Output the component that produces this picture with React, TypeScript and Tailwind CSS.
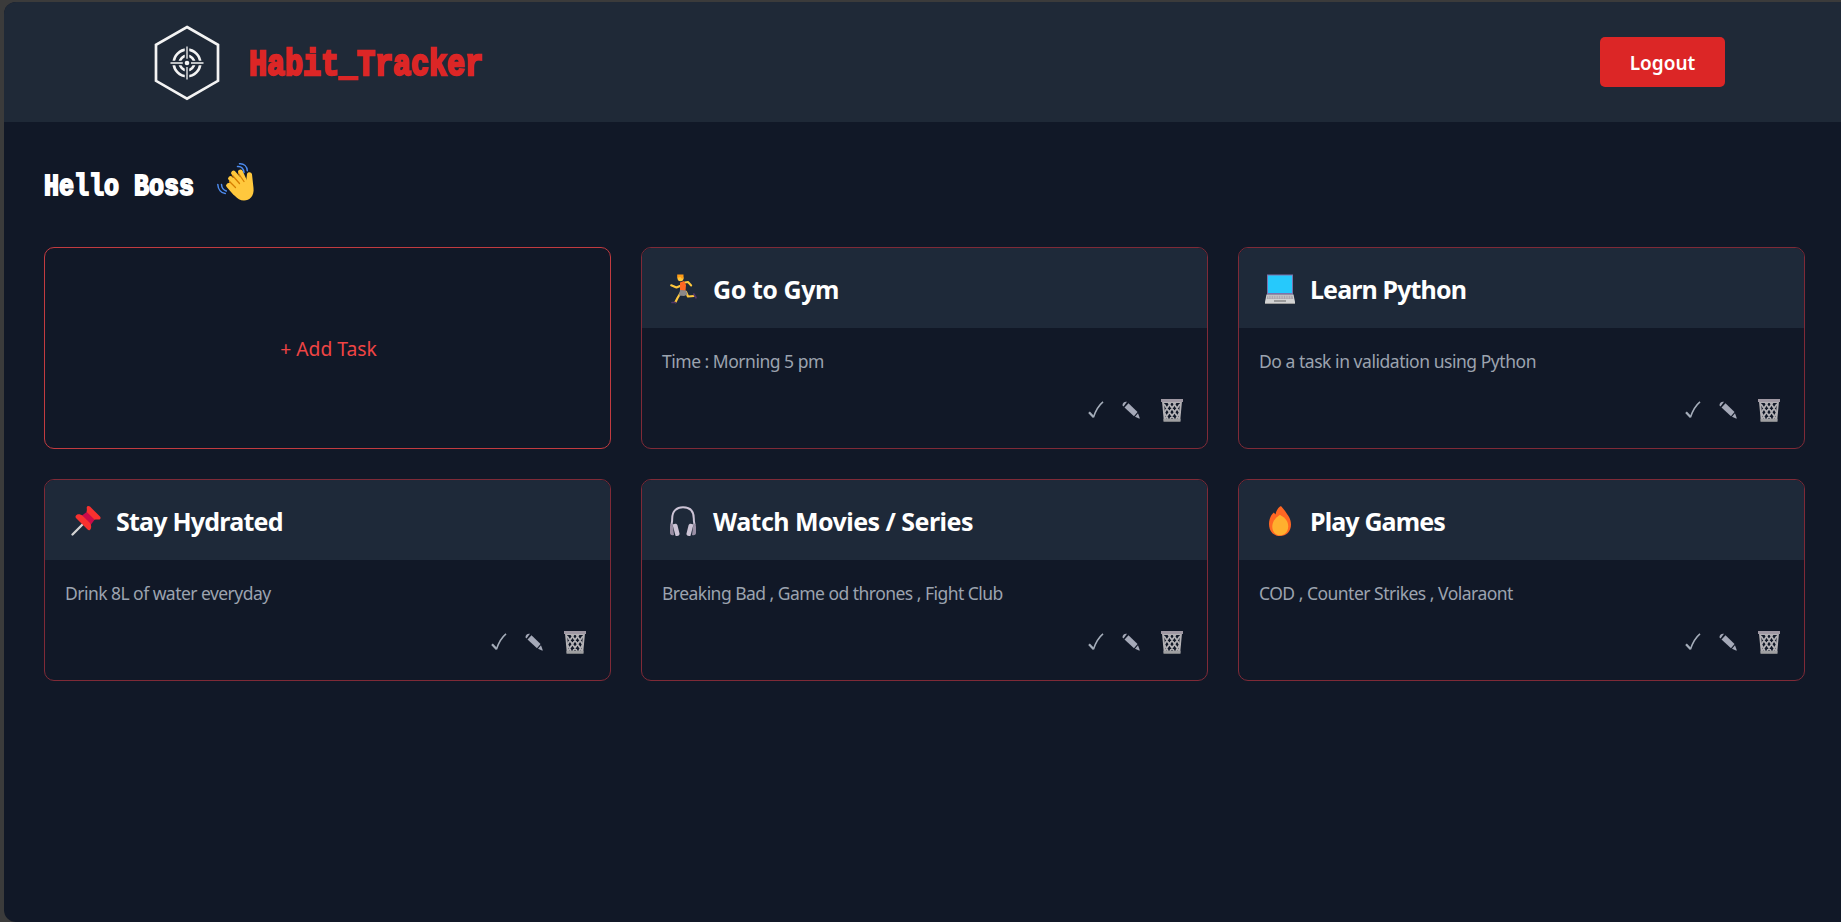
import type { ReactNode } from "react";

function Runner() {
  return (
    <svg viewBox="0 0 32 32" className="h-8 w-8" fill="none" strokeLinecap="round" strokeLinejoin="round">
      <path d="M13 14 9.500 15.500 4.200 13.300" stroke="#ffc83d" strokeWidth="2.200" />
      <path d="M18 10.500 21 10 24.200 13.500" stroke="#ffc83d" strokeWidth="2" />
      <path d="M13.500 21 10.500 26 8.500 30" stroke="#ffc83d" strokeWidth="2.200" />
      <path d="M19 20 21 24.500 27 24" stroke="#ffc83d" strokeWidth="2.200" />
      <path d="M13 10.500 17 9 19 13 18.500 19 13 18.500Z" fill="#ff6723" />
      <path d="m13 18 6 .5 1.500 4-3.500 1.500-5-.5Z" fill="#8b8889" />
      <path d="M26.800 22 29 25.800" stroke="#533566" strokeWidth="1.700" />
      <path d="M5 30.500h3.500" stroke="#533566" strokeWidth="1.700" />
      <circle cx="13.500" cy="6.300" r="3" fill="#ffc83d" />
      <path d="M10.200 6V2.500h6.300v4h-2L13.500 5Z" fill="#ff9b16" />
    </svg>
  );
}

function Laptop() {
  return (
    <svg viewBox="0 0 32 32" className="h-8 w-8">
      <path d="M3 2.500h26v20H3z" fill="#7d72ad" />
      <path d="M4 3.500h24v17.500H4z" fill="#26c9fc" />
      <path d="M2.500 22.500h27L31 30v2H1v-2Z" fill="#d3d3d3" />
      <path d="M3.500 23.500h25l.8 3.500H2.700Z" fill="#aaa5ae" />
      <path d="M4 25h24" stroke="#c9c9c9" strokeWidth="3" strokeDasharray=".7 1" />
      <path d="M10 28h12v2H10z" fill="#9b9b9b" />
      <path d="M1 31h30v1H1z" fill="#9b9b9b" />
    </svg>
  );
}

function Pin() {
  return (
    <svg viewBox="0 0 32 32" className="h-8 w-8">
      <path d="M13 20 2.500 30.500" stroke="#d3d3d3" strokeWidth="2.300" strokeLinecap="round" />
      <path d="m18 7 7.500 7.500-6 8L10 13Z" fill="#ca0b4a" />
      <path d="M16.700 3.800c0-2 2-2.500 3.300-1.200l10 10c1.400 1.500.3 3.200-1.700 2.900-1.500-.2-2.600-.2-3.600.3L16.500 7.800c.5-1.200.4-2.500.2-4Z" fill="#f8312f" />
      <path d="M6 11.500c1.500-1.800 4.500-1.500 6.500.3l7 6.700c2 2.200 2.300 5.500.7 7.200-.8.8-1.800.7-2.600-.1L6.200 14.200c-.8-.8-1-1.800-.2-2.700Z" fill="#f8312f" />
    </svg>
  );
}

function Headphones() {
  return (
    <svg viewBox="0 0 32 32" className="h-8 w-8">
      <path d="M4.500 21c0-2 .7-2.500.7-6.500C5.200 7 9.500 3.300 16 3.300S26.800 7 26.800 14.500c0 4 .7 4.500.7 6.500" fill="none" stroke="#cdc4d6" strokeWidth="2" />
      <path d="M3 23c0-2.500 1-4 2.500-3.500l1.500 11.500c-2.500 1-4.200-.5-4-2.500Z" fill="#998ea4" />
      <path d="M5.500 20.500c3-1.500 4.500-1 5 1l2 8c.5 2-2.500 3-4 2.300Z" fill="#cdc4d6" />
      <path d="M29 23c0-2.500-1-4-2.500-3.500l-1.500 11.500c2.500 1 4.200-.5 4-2.500Z" fill="#998ea4" />
      <path d="M26.500 20.500c-3-1.500-4.500-1-5 1l-2 8c-.5 2 2.500 3 4 2.300Z" fill="#cdc4d6" />
    </svg>
  );
}

function Flame() {
  return (
    <svg viewBox="0 0 32 32" className="h-8 w-8">
      <path d="M16 2.500C13.500 4.500 12 7.500 11.500 10.500L9.800 8.500C6.500 11.500 5 15.500 5 20 5 27.500 9.800 32 16 32s11-4.500 11-11.500c0-5.500-2.600-8.500-4.600-11.500-1.200-2-3.500-4.800-4.800-6.300-.5-.6-1.100-.6-1.600-.2Z" fill="#ff6723" />
      <path d="M15.300 11.200C11 14.200 8.300 17.800 8.300 22.500c0 5.500 3.400 8.800 7.700 8.800s8.200-3.300 8.200-8.800c0-5.500-3.200-8.800-7.600-11.300-.4-.2-.9-.2-1.300 0Z" fill="#ffb02e" />
    </svg>
  );
}

function Wave() {
  return (
    <svg viewBox="0 0 38 38" className="h-[38px] w-[38px]" fill="none" strokeLinecap="round" strokeLinejoin="round">
      <path d="M10.500 22 17 14l7 2 5 3.500 1-8.500c.5-2.500 4.500-2.500 5 .2L36.500 25c1 8-4 12.500-9.500 12.500-4 0-6.500-2-9-4.500Z" fill="#ffc83d" />
      <path d="m18 30-6.500-7.500M22 25 13.500 15.500M26 21 16.500 10M28 19l-4.500-10" stroke="#ffc83d" strokeWidth="4.800" />
      <path d="m12.500 18.500 6 6M15.500 12.500l7 8M21.500 10.500l5.500 8" stroke="#d67d00" strokeWidth="1.300" />
      <path d="M.8 21.500c.3 5 3.500 8.500 7.500 9M4.500 21.500c.2 3 2 5.500 4.800 6.500M20.500 3.500c3.500-.3 6 2 6.500 6M22.500.8c4.500-.3 7.500 2.700 7.800 7" stroke="#4d8bef" strokeWidth="1.500" />
    </svg>
  );
}

function Logo() {
  return (
    <svg viewBox="0 0 66 76" className="mt-px h-[76px] w-[66px]" fill="none" stroke="#f3f3f3">
      <path d="M33 2 64 19.800v36L33 73.700 2 55.800v-36Z" strokeWidth="2.700" />
      <circle cx="33" cy="38" r="13.300" strokeWidth="2.700" />
      <circle cx="33" cy="38" r="7.300" strokeWidth="2.700" />
      <path d="M33 22v12M33 42v12M17 38h12M37 38h12" stroke="#1f2937" strokeWidth="4.500" />
      <path d="M33 21.500v12.300M33 42v12.500M16.500 38h12.300M37 38h12.500" strokeWidth="1.300" />
      <circle cx="33" cy="38" r="2.300" fill="#f3f3f3" stroke="none" />
    </svg>
  );
}

function CheckMark() {
  return (
    <svg viewBox="0 0 16 18" className="h-[18px] w-4" fill="none" stroke="#a5adba">
      <path d="M1 11.300 5.500 16" strokeWidth="2.300" />
      <path d="M5.300 16.500C7.500 10 10.500 4.500 15 .8" strokeWidth="1.600" />
    </svg>
  );
}

function Pencil() {
  return (
    <svg viewBox="0 0 18 18" className="h-[18px] w-[18px]" fill="#a5a9b8">
      <path d="M.5 4.500C.3 2 2.500.3 5 .8L1.500 5.500Z" />
      <path d="M2.500 6.500 6.500 2.300 15.500 11 12 15.200Z" />
      <path d="m13 15.700 3-3.500 1.700 4.800c.1.500-.2.700-.7.600Z" />
    </svg>
  );
}

function Basket() {
  return (
    <svg viewBox="0 0 22 23" className="h-[23px] w-[22px]" fill="none" stroke="#b3b1b5">
      <path d="M2 3h18l-1.700 18H3.700Z" strokeWidth="1.900" />
      <path d="M7 3 18 20M12 3l7 11M3 5l10 15M3 13l4 7M15 3 4 20M10 3 3 14M19 5 9 20M19 13l-4 7" strokeWidth="1.700" />
      <path d="M0 1.500h22" stroke="#9f98a3" strokeWidth="3" />
      <path d="M2.500 21.300h17" stroke="#9f9fa1" strokeWidth="3" />
    </svg>
  );
}

type Task = { icon: ReactNode; title: string; titleClass: string; text: string; textClass: string };

const tasks: Task[] = [
  { icon: <Runner />, title: "Go to Gym", titleClass: "tracking-[-0.45px]", text: "Time : Morning 5 pm", textClass: "tracking-[-0.49px]" },
  { icon: <Laptop />, title: "Learn Python", titleClass: "tracking-[-0.88px]", text: "Do a task in validation using Python", textClass: "tracking-[-0.46px]" },
  { icon: <Pin />, title: "Stay Hydrated", titleClass: "tracking-[-0.78px]", text: "Drink 8L of water everyday", textClass: "tracking-[-0.54px]" },
  { icon: <Headphones />, title: "Watch Movies / Series", titleClass: "tracking-[-0.54px]", text: "Breaking Bad , Game od thrones , Fight Club", textClass: "tracking-[-0.53px]" },
  { icon: <Flame />, title: "Play Games", titleClass: "tracking-[-0.87px]", text: "COD , Counter Strikes , Volaraont", textClass: "tracking-[-0.51px]" },
];

function TaskCard({ icon, title, titleClass, text, textClass }: Task) {
  return (
    <article className="flex h-[202px] flex-col overflow-hidden rounded-[10px] border border-[#7f2a37]">
      <header className="flex h-20 shrink-0 items-center gap-[14.5px] bg-gray-800 bg-[#1f2937] pl-[24.5px]">
        {icon}
        <h2 className={`whitespace-nowrap pt-[2px] text-[25px] leading-8 font-bold text-white ${titleClass}`}>{title}</h2>
      </header>
      <p className={`mt-[19px] whitespace-nowrap pl-5 text-[17.5px] leading-7 text-[#9ca3af] ${textClass}`}>{text}</p>
      <div className="mt-[23px] flex h-6 items-center justify-end pr-[24.5px]">
        <CheckMark />
        <span className="ml-[18px] flex"><Pencil /></span>
        <span className="ml-[21px] flex"><Basket /></span>
      </div>
    </article>
  );
}

export default function App() {
  return (
    <div className="h-screen overflow-hidden bg-[#3b3b3b] pt-[2px] pl-1 font-['Noto_Sans',sans-serif]">
      <div className="h-full overflow-hidden rounded-l-[12px] bg-[#111827]">
        <header className="flex h-[120px] items-center justify-between bg-[#1f2937] pr-[116px] pl-[150px]">
          <div className="flex items-center">
            <Logo />
            <h1 className="ml-[29px] origin-center scale-y-[1.2] pt-[5px] font-['Liberation_Mono',monospace] text-[30px] leading-9 font-bold text-[#dc2626] [-webkit-text-stroke:2px_#dc2626]">
              Habit_Tracker
            </h1>
          </div>
          <button className="h-[50px] w-[125px] rounded-[5px] bg-[#dc2626] pt-[2px] text-[19px] font-semibold text-white">Logout</button>
        </header>
        <main className="pr-9 pl-10">
          <div className="flex h-[125px] items-center">
            <h2 className="origin-center scale-y-[1.18] pt-[5px] font-['Liberation_Mono',monospace] text-[25px] leading-8 font-bold text-white [-webkit-text-stroke:1.6px_white]">
              Hello Boss
            </h2>
            <span className="mb-[5px] ml-[22.5px] flex"><Wave /></span>
          </div>
          <div className="grid grid-cols-3 gap-[30px]">
            <button className="h-[202px] rounded-[10px] border border-[#c23b40] pt-[2px] pl-[2px] text-[19.3px] text-[#ef4444]">+ Add Task</button>
            {tasks.map((task) => (
              <TaskCard key={task.title} {...task} />
            ))}
          </div>
        </main>
      </div>
    </div>
  );
}
